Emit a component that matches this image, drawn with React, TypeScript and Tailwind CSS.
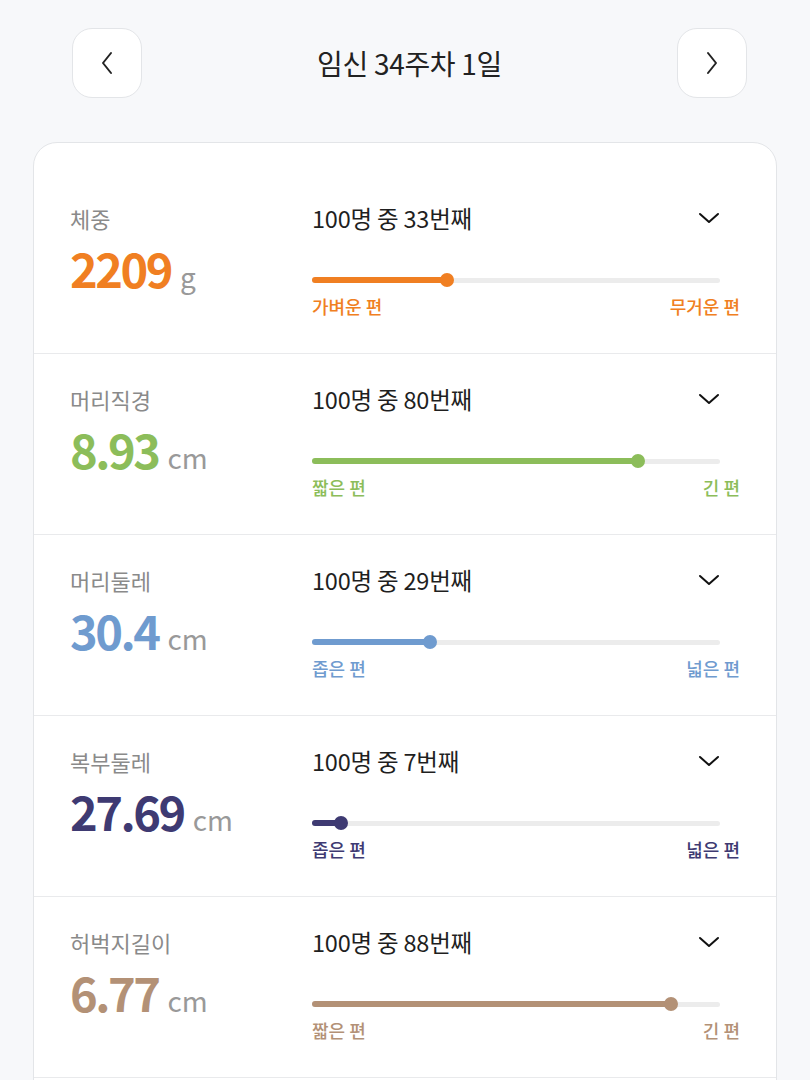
import React from "react";

type Item = {
  label: string;
  value: string;
  unit: string;
  rank: number;
  color: string;
  left: string;
  right: string;
};

const items: Item[] = [
  { label: "체중", value: "2209", unit: "g", rank: 33, color: "#f07f22", left: "가벼운 편", right: "무거운 편" },
  { label: "머리직경", value: "8.93", unit: "cm", rank: 80, color: "#8cbd5a", left: "짧은 편", right: "긴 편" },
  { label: "머리둘레", value: "30.4", unit: "cm", rank: 29, color: "#6f9bcf", left: "좁은 편", right: "넓은 편" },
  { label: "복부둘레", value: "27.69", unit: "cm", rank: 7, color: "#3e3a72", left: "좁은 편", right: "넓은 편" },
  { label: "허벅지길이", value: "6.77", unit: "cm", rank: 88, color: "#b39176", left: "짧은 편", right: "긴 편" },
];

const font = { fontFamily: '"Noto Sans CJK KR", "Noto Sans", sans-serif' };

function Row({ it }: { it: Item }) {
  return (
    <div className="flex h-[181px] border-b border-[#e9eaec] pt-[31px]">
      <div className="w-[278px] shrink-0 pl-[36px]">
        <div className="text-[22px] leading-[28px] text-[#8a8a8a]">{it.label}</div>
        <div className="mt-[8px] flex items-baseline">
          <span
            className="text-[47px] leading-[56px] font-bold tracking-[-2.5px]"
            style={{ color: it.color }}
          >
            {it.value}
          </span>
          <span className="ml-[9px] text-[28px] text-[#999999]">{it.unit}</span>
        </div>
      </div>
      <div className="w-[428px] shrink-0">
        <div className="flex items-center justify-between">
          <div className="text-[23.5px] leading-[28px] text-[#1f1f1f] tracking-[-0.2px]">
            100명 중 {it.rank}번째
          </div>
          <svg width="22" height="14" viewBox="0 0 22 14" className="mr-[20px]">
            <path d="M2 3 L11 11 L20 3" fill="none" stroke="#111" strokeWidth="2" strokeLinecap="round" strokeLinejoin="round" />
          </svg>
        </div>
        <div className="relative mt-[41px] h-[14px] w-[408px]">
          <div className="absolute left-0 right-0 top-[5px] h-[5px] rounded-full bg-[#ececec]" />
          <div
            className="absolute left-0 top-[4px] h-[6px] rounded-full"
            style={{ width: `${it.rank}%`, backgroundColor: it.color }}
          />
          <div
            className="absolute top-0 h-[14px] w-[14px] -translate-x-1/2 rounded-full"
            style={{ left: `${it.rank}%`, backgroundColor: it.color }}
          />
        </div>
        <div
          className="mt-[7px] flex justify-between text-[18px] leading-[24px] font-medium"
          style={{ color: it.color }}
        >
          <span>{it.left}</span>
          <span>{it.right}</span>
        </div>
      </div>
    </div>
  );
}

export default function App() {
  return (
    <div className="min-h-[1080px] w-[810px] bg-[#f7f8fa] overflow-hidden" style={font}>
      <div className="flex items-center justify-between pl-[72px] pr-[63px] pt-[28px]">
        <button className="flex h-[70px] w-[70px] items-center justify-center rounded-[20px] border border-[#e3e5e8] bg-white">
          <svg width="16" height="26" viewBox="0 0 16 26">
            <path d="M12 3 L4 13 L12 23" fill="none" stroke="#222" strokeWidth="2" strokeLinecap="round" strokeLinejoin="round" />
          </svg>
        </button>
        <div className="text-[28px] text-[#222] tracking-[-0.3px]">임신 34주차 1일</div>
        <button className="flex h-[70px] w-[70px] items-center justify-center rounded-[20px] border border-[#e3e5e8] bg-white">
          <svg width="16" height="26" viewBox="0 0 16 26">
            <path d="M4 3 L12 13 L4 23" fill="none" stroke="#222" strokeWidth="2" strokeLinecap="round" strokeLinejoin="round" />
          </svg>
        </button>
      </div>
      <div className="mx-[33px] mt-[44px] rounded-[24px] border border-[#e3e5e8] bg-white pt-[30px]">
        {items.map((it) => (
          <Row key={it.label} it={it} />
        ))}
        <div className="h-[180px]" />
      </div>
    </div>
  );
}
